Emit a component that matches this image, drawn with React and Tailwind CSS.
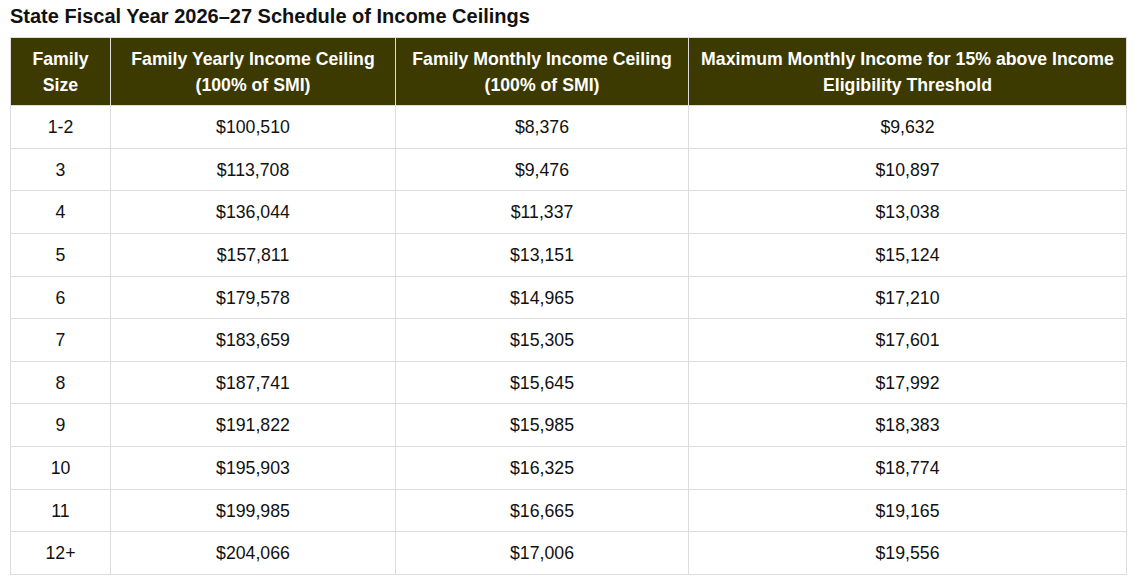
import React from 'react';

const rows = [
  ['1-2', '$100,510', '$8,376', '$9,632'],
  ['3', '$113,708', '$9,476', '$10,897'],
  ['4', '$136,044', '$11,337', '$13,038'],
  ['5', '$157,811', '$13,151', '$15,124'],
  ['6', '$179,578', '$14,965', '$17,210'],
  ['7', '$183,659', '$15,305', '$17,601'],
  ['8', '$187,741', '$15,645', '$17,992'],
  ['9', '$191,822', '$15,985', '$18,383'],
  ['10', '$195,903', '$16,325', '$18,774'],
  ['11', '$199,985', '$16,665', '$19,165'],
  ['12+', '$204,066', '$17,006', '$19,556'],
];

const headers = [
  { label: <>Family<br />Size</>, w: 'w-[100px]' },
  { label: <>Family Yearly Income Ceiling<br />(100% of SMI)</>, w: 'w-[285px]' },
  { label: <>Family Monthly Income Ceiling<br />(100% of SMI)</>, w: 'w-[293px]' },
  { label: <>Maximum Monthly Income for 15% above Income Eligibility Threshold</>, w: 'w-[438px]' },
];

export default function App() {
  return (
    <div className="bg-white min-h-[586px] px-[10px] pt-[2px] text-black font-['Liberation_Sans',Arial,sans-serif]">
      <h3 className="text-[20px] font-bold leading-[28px] mb-[7px] text-[#111]">
        State Fiscal Year 2026–27 Schedule of Income Ceilings
      </h3>
      <table className="table-fixed border-collapse w-[1117px] text-[17.7px] leading-[25.6px]">
        <thead>
          <tr className="bg-[#3c3a00]">
            {headers.map((h, i) => (
              <th
                key={i}
                className={`${h.w} border border-[#dddddd] text-white font-bold text-center px-1 pt-[9px] pb-[7px]`}
              >
                {h.label}
              </th>
            ))}
          </tr>
        </thead>
        <tbody>
          {rows.map((row, r) => (
            <tr key={r}>
              {row.map((cell, c) => (
                <td key={c} className="border border-[#dddddd] text-center px-2 pt-[9px] pb-[7px] text-[#111]">
                  {cell}
                </td>
              ))}
            </tr>
          ))}
        </tbody>
      </table>
    </div>
  );
}
